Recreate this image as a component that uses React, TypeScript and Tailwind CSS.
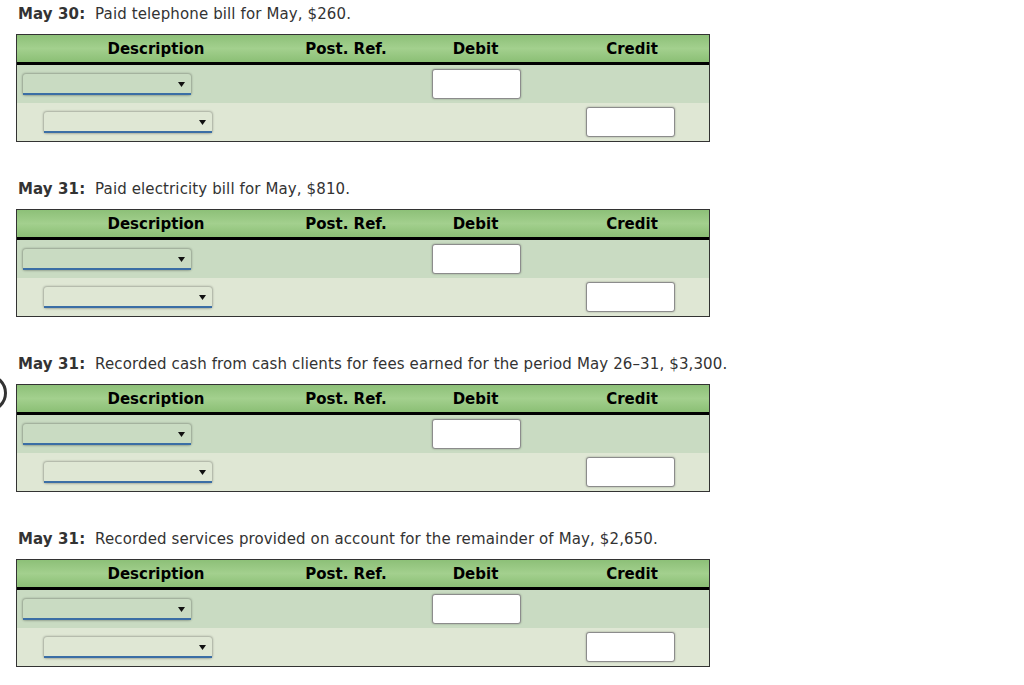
import React from 'react';

const entries = [
  { date: 'May 30:', text: 'Paid telephone bill for May, $260.' },
  { date: 'May 31:', text: 'Paid electricity bill for May, $810.' },
  { date: 'May 31:', text: 'Recorded cash from cash clients for fees earned for the period May 26–31, $3,300.' },
  { date: 'May 31:', text: 'Recorded services provided on account for the remainder of May, $2,650.' },
];

function Select({ indent }: { indent?: boolean }) {
  return (
    <div className={`relative h-[21px] w-[168px] ${indent ? 'ml-[27px]' : 'ml-[6px]'}`}>
      <div className="absolute inset-0 rounded-[3px] shadow-[0_0_2px_1px_rgba(0,0,0,0.25)]" />
      <div className="absolute bottom-0 left-0 right-0 h-[2px] bg-[#3b6ea5]" />
      <svg className="absolute right-[6px] top-[8px]" width="7" height="5" viewBox="0 0 7 5">
        <path d="M0 0 L7 0 L3.5 5 Z" fill="#111" />
      </svg>
    </div>
  );
}

function Box() {
  return <div className="h-[30px] w-[89px] rounded-[3px] border border-[#8c8c8c] bg-white shadow-[0_0_2px_rgba(0,0,0,0.35)]" />;
}

function Journal() {
  const cols = 'grid grid-cols-[278px_102px_157px_156px]';
  return (
    <div className="w-[694px] border border-[#333] ml-4">
      <div className={`${cols} h-[27px] items-center pt-[1px] bg-gradient-to-b from-[#8dc078] via-[#a3d08e] to-[#8bbf75] text-[15px] font-bold text-black`}>
        <div className="text-center">Description</div>
        <div className="text-center">Post. Ref.</div>
        <div className="text-center">Debit</div>
        <div className="text-center">Credit</div>
      </div>
      <div className="h-[3px] bg-black" />
      <div className={`${cols} h-[38px] items-center bg-[#c9dbc2]`}>
        <Select />
        <div />
        <div className="flex justify-center pl-[1px]"><Box /></div>
        <div />
      </div>
      <div className={`${cols} h-[38px] items-center bg-[#dfe7d4]`}>
        <Select indent />
        <div />
        <div />
        <div className="flex justify-center pr-[4px]"><Box /></div>
      </div>
    </div>
  );
}

export default function App() {
  return (
    <div className="relative w-[1024px] h-[685px] overflow-hidden bg-white text-[#333]" style={{ fontFamily: '"DejaVu Sans", Verdana, sans-serif' }}>
      <div className="absolute left-[-34px] top-[374px] h-[38px] w-[41px] rounded-full border-[3px] border-[#333]" />
      <div className="pt-[4px]">
        {entries.map((e, i) => (
          <div key={i} className={i === 0 ? '' : 'mt-[37px]'}>
            <div className="ml-[18px] h-[30px] pt-[1px] text-[15px] leading-[18px] tracking-[0.12px]">
              <span className="font-bold">{e.date}</span>
              <span>&nbsp; {e.text}</span>
            </div>
            <Journal />
          </div>
        ))}
      </div>
    </div>
  );
}
